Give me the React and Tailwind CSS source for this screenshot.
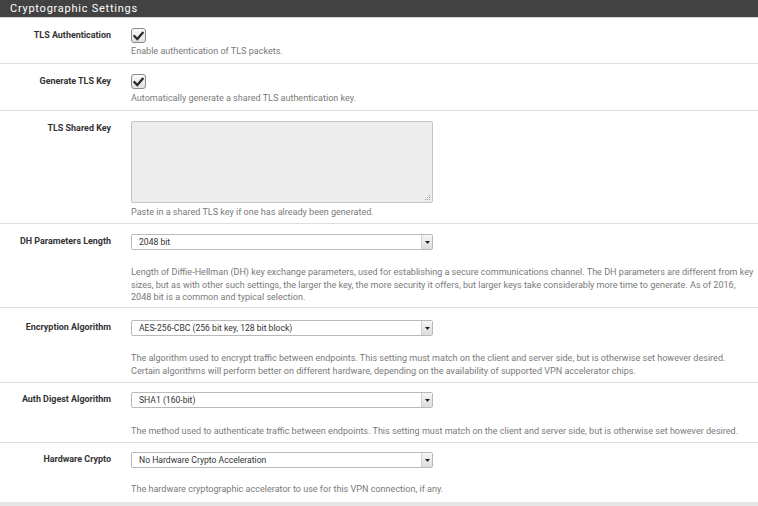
import React from "react";

const font = { fontFamily: "Roboto, 'Liberation Sans', sans-serif" };

function Checkbox() {
  return (
    <div className="w-[15px] h-[15px] rounded-[3px] border border-[#8a8a8a] bg-gradient-to-b from-[#fafafa] to-[#e2e2e2] flex items-center justify-center">
      <svg width="11" height="10" viewBox="0 0 11 10">
        <path d="M1.5 5.2 L4.3 8 L9.6 1.8" fill="none" stroke="#2b2b2b" strokeWidth="2.3" strokeLinecap="square" />
      </svg>
    </div>
  );
}

function Select({ value }) {
  return (
    <div className="w-[302px] h-[16px] border border-[#b9b9b9] rounded-[2px] bg-white flex items-stretch">
      <div className="flex-1 pl-[7px] text-[8.6px] leading-[14px] text-[#333]">{value}</div>
      <div className="w-[11px] border-l border-[#d0d0d0] bg-gradient-to-b from-[#f6f6f6] to-[#dcdcdc] flex items-center justify-center">
        <svg width="5" height="3" viewBox="0 0 5 3"><path d="M0 0 H5 L2.5 3 Z" fill="#222" /></svg>
      </div>
    </div>
  );
}

function Row({ label, h, pt, children, last }) {
  return (
    <div className={`flex ${last ? "" : "border-b border-[#dedede]"}`} style={{ height: h }}>
      <div className="w-[111px] text-right text-[8.95px] font-bold text-[#333] leading-[12px]" style={{ paddingTop: pt }}>
        {label}
      </div>
      <div className="ml-[20px] flex-1 pr-[3px]" style={{ paddingTop: pt - 1 }}>
        {children}
      </div>
    </div>
  );
}

function Help({ children, mt }) {
  return (
    <div className="text-[9.05px] leading-[12.5px] text-[#7a7a7a]" style={{ marginTop: mt }}>
      {children}
    </div>
  );
}

export default function App() {
  return (
    <div className="w-[758px] h-[506px] bg-white overflow-hidden" style={font}>
      <div className="h-[17px] bg-[#424242] text-white text-[11px] tracking-[0.75px] leading-[17px] pl-[10px]">
        Cryptographic Settings
      </div>
      <div className="h-[1px] bg-[#d4d4d4]" />
      <Row label="TLS Authentication" h={46} pt={11}>
        <Checkbox />
        <Help mt={2}>Enable authentication of TLS packets.</Help>
      </Row>
      <Row label="Generate TLS Key" h={47} pt={11}>
        <Checkbox />
        <Help mt={3}>Automatically generate a shared TLS authentication key.</Help>
      </Row>
      <Row label="TLS Shared Key" h={113} pt={11}>
        <div className="relative w-[302px] h-[82px] border border-[#c4c4c4] rounded-[2px] bg-[#ededed]">
          <svg className="absolute right-[1px] bottom-[1px]" width="7" height="7" viewBox="0 0 7 7">
            <g fill="#9a9a9a">
              <rect x="5" y="1" width="1" height="1" />
              <rect x="3" y="3" width="1" height="1" />
              <rect x="5" y="3" width="1" height="1" />
              <rect x="1" y="5" width="1" height="1" />
              <rect x="3" y="5" width="1" height="1" />
              <rect x="5" y="5" width="1" height="1" />
            </g>
          </svg>
        </div>
        <Help mt={3}>Paste in a shared TLS key if one has already been generated.</Help>
      </Row>
      <Row label="DH Parameters Length" h={84} pt={11}>
        <Select value="2048 bit" />
        <Help mt={16}>
          Length of Diffie-Hellman (DH) key exchange parameters, used for establishing a secure communications channel. The DH parameters are different from key sizes, but as with other such settings, the larger the key, the more security it offers, but larger keys take considerably more time to generate. As of 2016, 2048 bit is a common and typical selection.
        </Help>
      </Row>
      <Row label="Encryption Algorithm" h={75} pt={13}>
        <Select value="AES-256-CBC (256 bit key, 128 bit block)" />
        <Help mt={16}>
          The algorithm used to encrypt traffic between endpoints. This setting must match on the client and server side, but is otherwise set however desired. Certain algorithms will perform better on different hardware, depending on the availability of supported VPN accelerator chips.
        </Help>
      </Row>
      <Row label="Auth Digest Algorithm" h={60} pt={10}>
        <Select value="SHA1 (160-bit)" />
        <Help mt={17}>
          The method used to authenticate traffic between endpoints. This setting must match on the client and server side, but is otherwise set however desired.
        </Help>
      </Row>
      <Row label="Hardware Crypto" h={59} pt={10} last>
        <Select value="No Hardware Crypto Acceleration" />
        <Help mt={15}>The hardware cryptographic accelerator to use for this VPN connection, if any.</Help>
      </Row>
      <div className="h-[5px] bg-[#e6e6e6]" />
    </div>
  );
}
